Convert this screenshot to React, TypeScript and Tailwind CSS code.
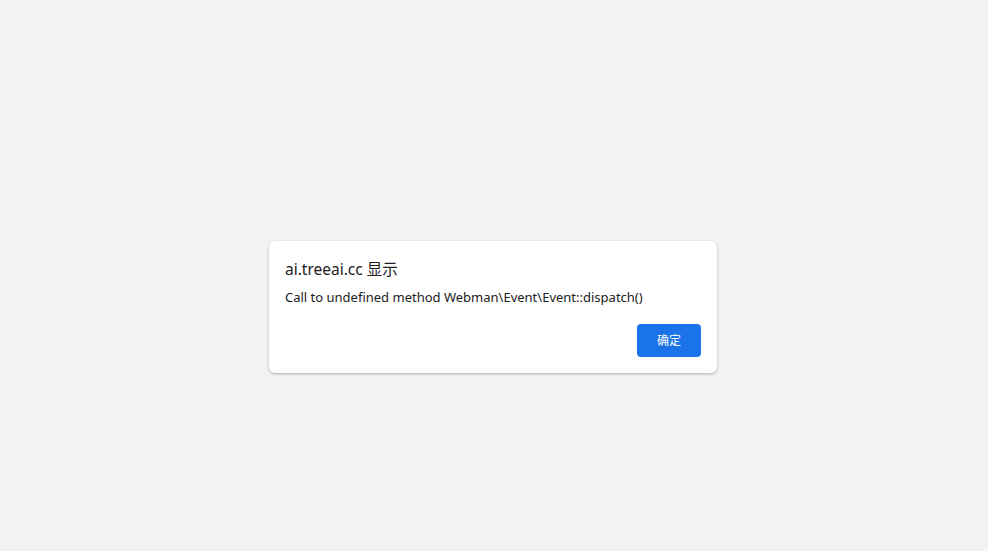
import React from "react";

const App = () => {
    return (
        <div className="flex h-[551px] w-full justify-center bg-[#f1f2f4] pt-[241px] font-['Noto_Sans','Noto_Sans_CJK_SC',sans-serif]">
            <div className="mr-[2px] flex h-[132px] w-[448px] flex-col rounded-md bg-white px-4 pt-4 pb-4 shadow-[0_1px_3px_rgba(0,0,0,0.28)]">
                <h2 className="text-[15.5px] leading-6 text-[#202124]">ai.treeai.cc 显示</h2>
                <p className="mt-[6px] text-[13px] leading-5 text-[#202124]">
                    Call to undefined method Webman\Event\Event::dispatch()
                </p>
                <div className="mt-auto flex justify-end">
                    <button className="h-[33px] w-16 rounded bg-[#1a73e8] text-[12px] text-white">确定</button>
                </div>
            </div>
        </div>
    );
};

export default App;
